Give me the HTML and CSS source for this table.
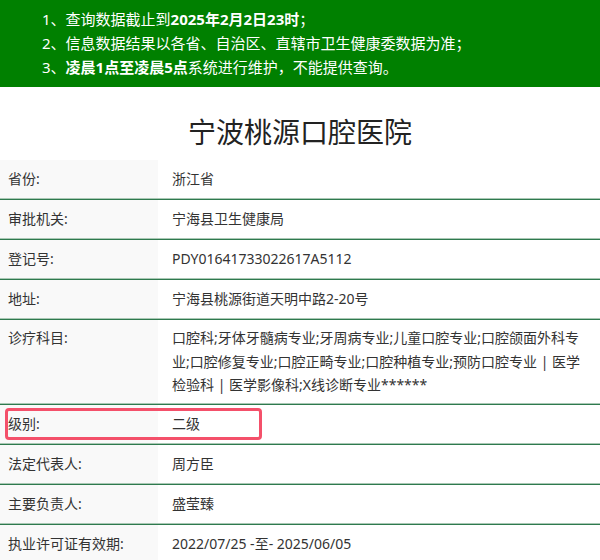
FILE: index.html
```html
<!DOCTYPE html>
<html lang="zh-CN">
<head>
<meta charset="utf-8">
<title>宁波桃源口腔医院</title>
<link rel="stylesheet" href="styles.css">
</head>
<body>
<div class="notice">
  <p>1、查询数据截止到<b>2025年2月2日23时</b>；</p>
  <p>2、信息数据结果以各省、自治区、直辖市卫生健康委数据为准；</p>
  <p>3、<b>凌晨1点至凌晨5点</b>系统进行维护，不能提供查询。</p>
</div>
<h1 class="title">宁波桃源口腔医院</h1>
<div class="info">
  <div class="row"><div class="label">省份:</div><div class="value">浙江省</div></div>
  <div class="row"><div class="label">审批机关:</div><div class="value">宁海县卫生健康局</div></div>
  <div class="row"><div class="label">登记号:</div><div class="value">PDY01641733022617A5112</div></div>
  <div class="row"><div class="label">地址:</div><div class="value">宁海县桃源街道天明中路2-20号</div></div>
  <div class="row multi"><div class="label">诊疗科目:</div><div class="value">口腔科;牙体牙髓病专业;牙周病专业;儿童口腔专业;口腔颌面外科专业;口腔修复专业;口腔正畸专业;口腔种植专业;预防口腔专业 | 医学检验科 | 医学影像科;X线诊断专业******</div></div>
  <div class="row highlighted"><div class="label">级别:</div><div class="value">二级</div><span class="mark"></span></div>
  <div class="row"><div class="label">法定代表人:</div><div class="value">周方臣</div></div>
  <div class="row"><div class="label">主要负责人:</div><div class="value">盛莹臻</div></div>
  <div class="row last"><div class="label">执业许可证有效期:</div><div class="value">2022/07/25 -至- 2025/06/05</div></div>
</div>
</body>
</html>
```
FILE: styles.css
```css
html, body {
  margin: 0;
  padding: 0;
  background: #ffffff;
}
body {
  font-family: "Noto Sans", "Noto Sans CJK SC", sans-serif;
  color: #333333;
  font-size: 14px;
}
.notice {
  background: #008000;
  color: #ffffff;
  height: 87px;
  box-sizing: border-box;
  padding: 7px 0 0 42px;
  font-size: 15px;
  line-height: 24px;
}
.notice p {
  margin: 0;
}
.notice b {
  font-weight: 700;
}
.title {
  margin: 0;
  padding: 25px 0 8px;
  text-align: center;
  font-size: 28px;
  line-height: 40px;
  font-weight: 400;
  color: #222222;
}
.info {
  display: flex;
  flex-direction: column;
}
.row {
  position: relative;
  display: grid;
  grid-template-columns: 158px 1fr;
  border-bottom: 1px solid #2e7a4e;
  box-shadow: inset 0 -1px 0 #aac8b5;
  padding-bottom: 1px;
}
.row.last {
  border-bottom: none;
  box-shadow: none;
}
.label, .value {
  min-height: 38px;
  box-sizing: border-box;
  display: flex;
  align-items: center;
  padding: 6px 14px 6px 8px;
  line-height: 23.5px;
}
.label {
  background: #f9f9f9;
}
.value {
  padding-left: 14px;
}
.multi .label, .multi .value {
  align-items: flex-start;
}
.mark {
  position: absolute;
  left: 5px;
  top: 3px;
  width: 257px;
  height: 32px;
  box-sizing: border-box;
  border: 3px solid #f4506a;
  border-radius: 4px;
}
```
